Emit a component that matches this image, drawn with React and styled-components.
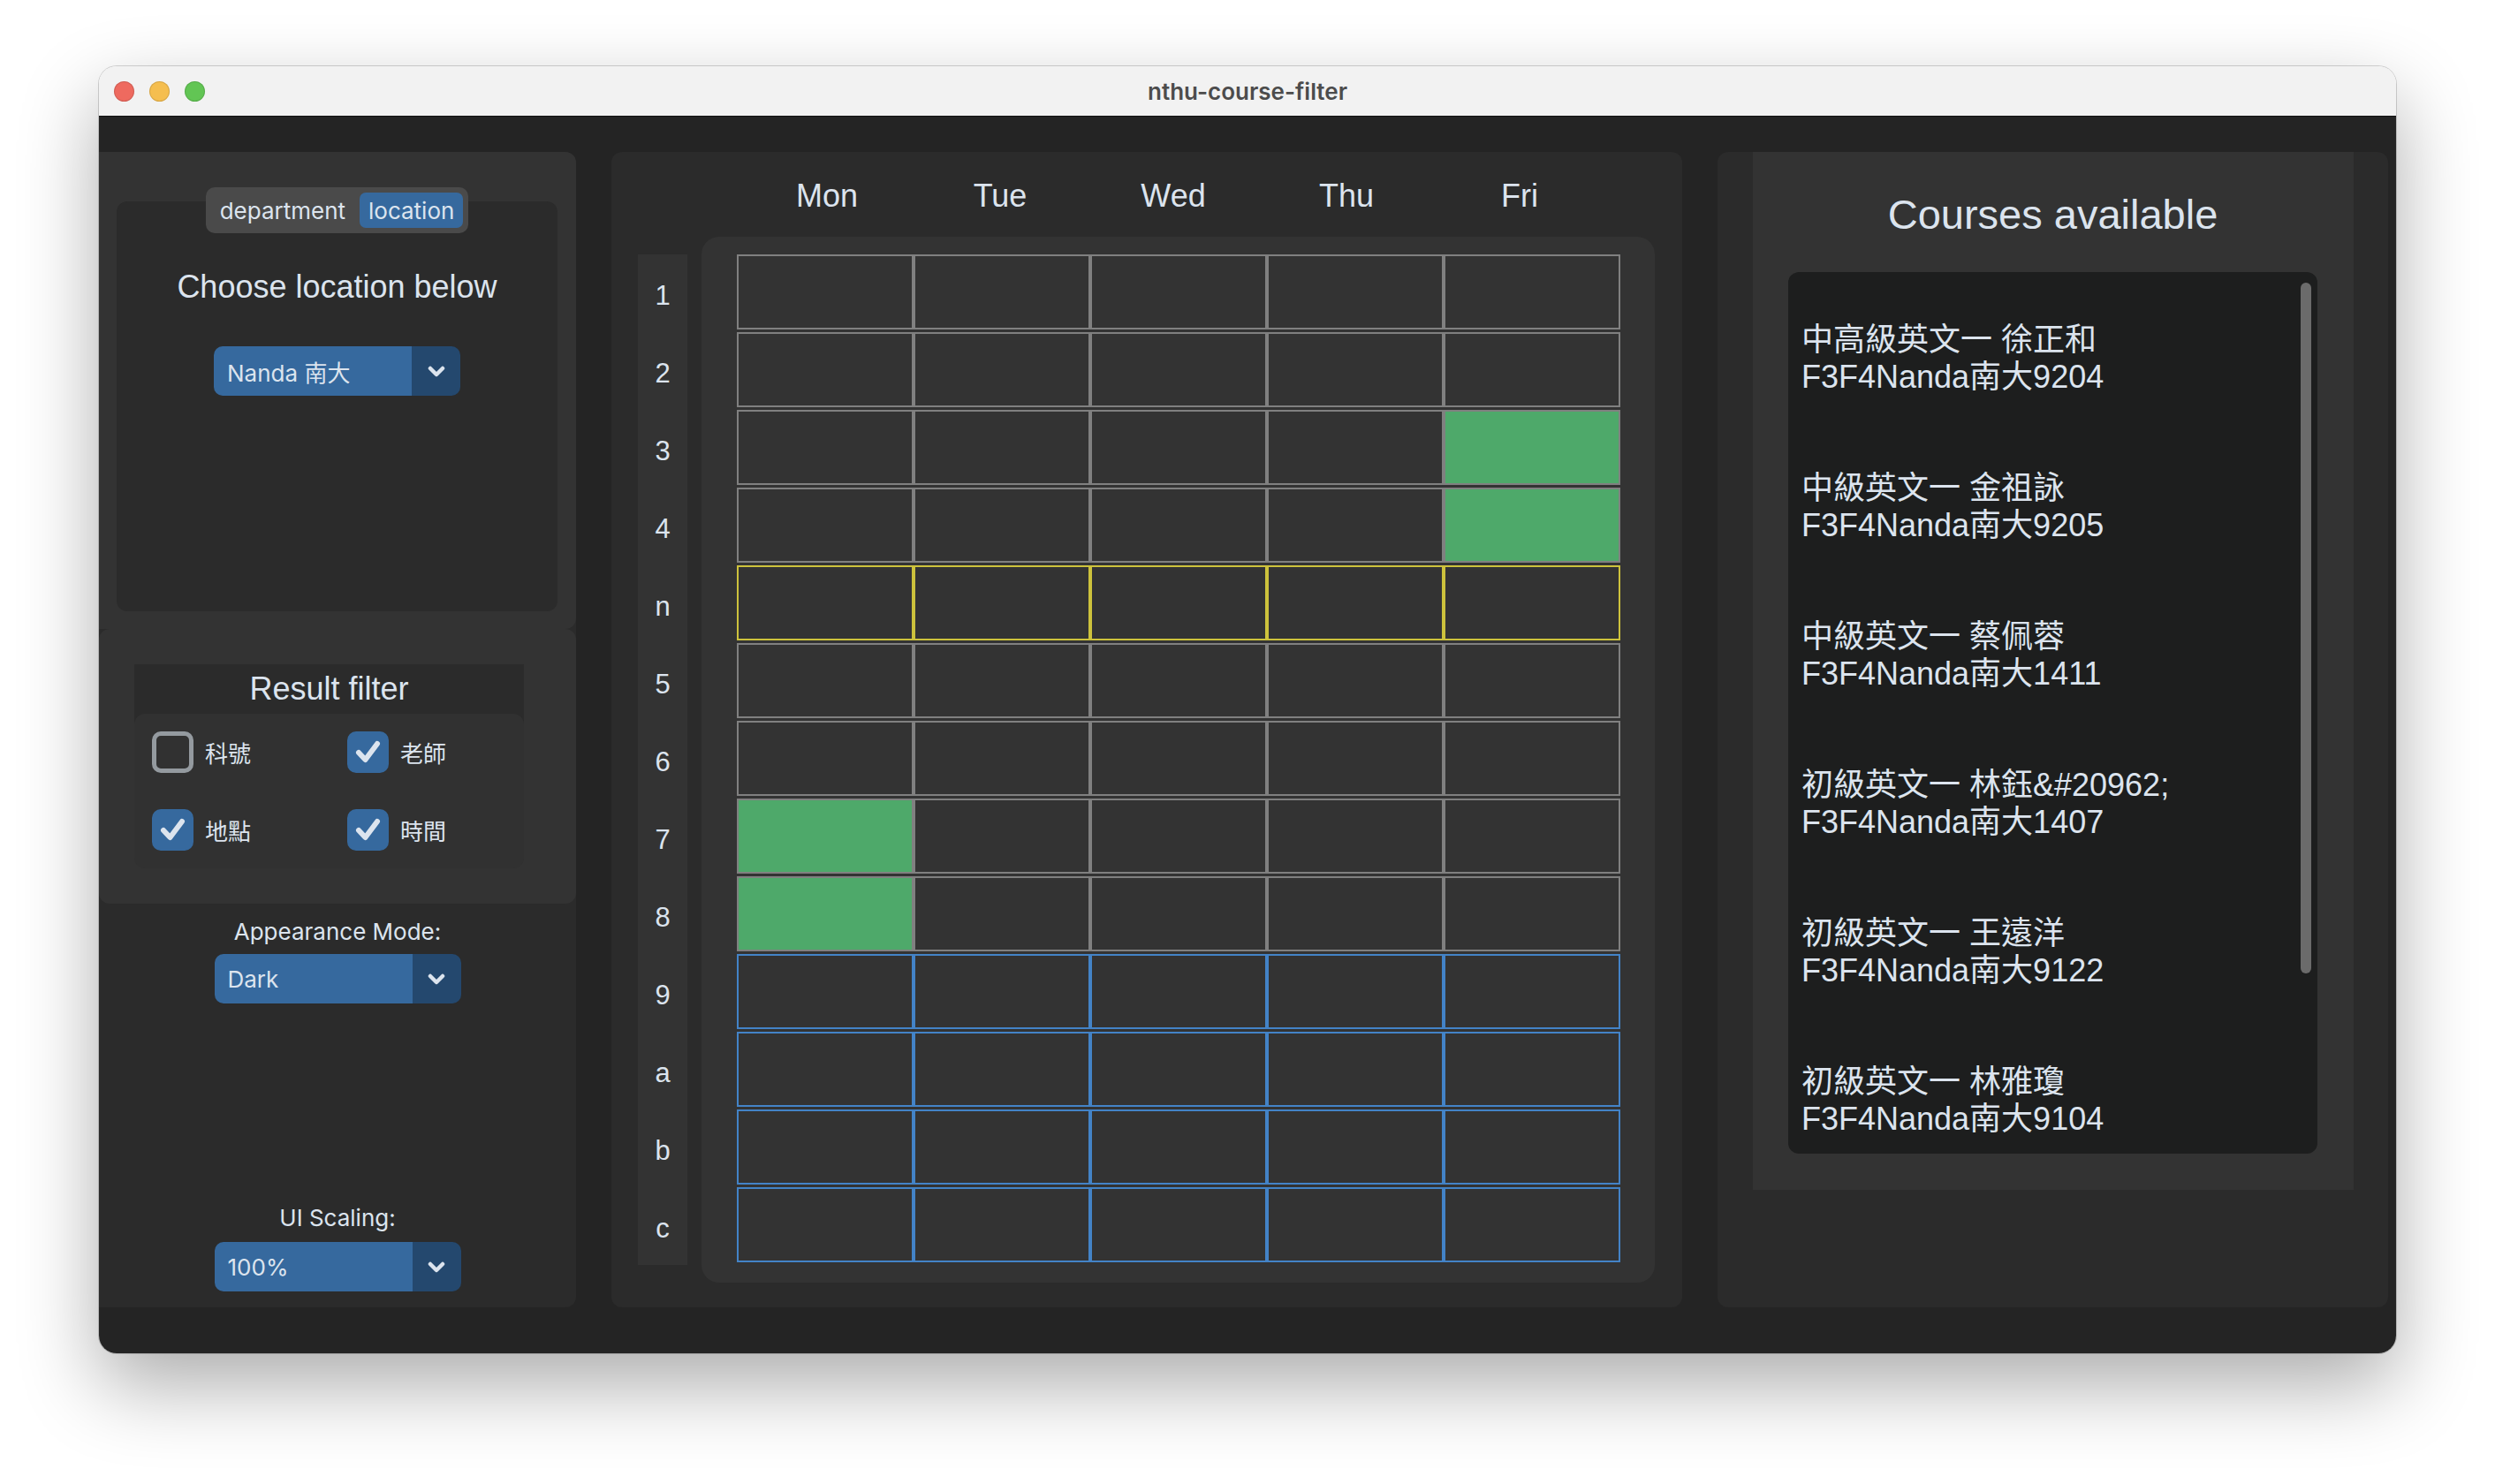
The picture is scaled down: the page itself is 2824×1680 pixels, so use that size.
import styled, { createGlobalStyle } from "styled-components";

const GlobalStyle = createGlobalStyle`
  html, body {
    margin: 0;
    padding: 0;
    background: #ffffff;
  }
  body {
    font-family: "Liberation Sans", "Noto Sans CJK TC", sans-serif;
    color: #dce4ee;
  }
  * {
    box-sizing: border-box;
  }
`;

const Page = styled.div`
  width: 2824px;
  height: 1680px;
  padding: 75px 0 0 112px;
`;

const Window = styled.div`
  width: 2600px;
  height: 1457px;
  display: flex;
  flex-direction: column;
  border-radius: 20px;
  overflow: hidden;
  box-shadow: 0 0 0 1px rgba(0, 0, 0, 0.16), 0 36px 90px rgba(0, 0, 0, 0.33);
`;

const TitleBar = styled.div`
  height: 57px;
  display: grid;
  grid-template-columns: 1fr auto 1fr;
  align-items: center;
  background: #f2f2f2;
  border-bottom: 1px solid #111;
`;

const Lights = styled.div`
  display: flex;
  gap: 17px;
  padding-left: 17px;
`;

const Light = styled.span`
  width: 23px;
  height: 23px;
  border-radius: 50%;
  background: ${(p) => p.$color};
  box-shadow: inset 0 0 0 1px rgba(0, 0, 0, 0.12);
`;

const WindowTitle = styled.div`
  font-family: "Inter", sans-serif;
  font-weight: 600;
  font-size: 26px;
  color: #4c4c4c;
`;

const Content = styled.div`
  flex: 1;
  display: flex;
  gap: 40px;
  padding: 40px 9px 52px 0;
  background: #242424;
`;

/* ---------- sidebar ---------- */

const Sidebar = styled.div`
  width: 540px;
  display: flex;
  flex-direction: column;
  background: #2b2b2b;
  border-radius: 0 12px 12px 0;
  padding-bottom: 18px;
`;

const TopFrame = styled.div`
  height: 540px;
  display: flex;
  padding: 56px 21px 20px 20px;
  background: #333333;
  border-radius: 0 12px 12px 0;
`;

const TabFrame = styled.div`
  flex: 1;
  display: flex;
  flex-direction: column;
  align-items: center;
  background: #2b2b2b;
  border-radius: 12px;
`;

const Segmented = styled.div`
  margin-top: -16px;
  display: flex;
  gap: 6px;
  padding: 6px;
  background: #4a4a4a;
  border-radius: 10px;
`;

const SegButton = styled.div`
  height: 40px;
  padding: 0 10px;
  display: flex;
  align-items: center;
  font-family: "Inter", sans-serif;
  font-size: 26px;
  color: #dce4ee;
  border-radius: 7px;
  background: ${(p) => (p.$active ? "#36699e" : "transparent")};
`;

const ChooseLabel = styled.div`
  margin-top: 39px;
  font-size: 36px;
  line-height: 43px;
`;

const Dropdown = styled.div`
  margin-top: ${(p) => p.$top || 0}px;
  width: 279px;
  height: 56px;
  display: flex;
  border-radius: 10px;
  overflow: hidden;
  align-self: center;
`;

const DropValue = styled.div`
  flex: 1;
  display: flex;
  align-items: center;
  padding-left: 15px;
  background: #36699e;
  font-family: "Inter", "Noto Sans CJK TC", sans-serif;
  font-size: 26px;
  color: #dce4ee;
`;

const DropArrow = styled.div`
  width: 55px;
  display: flex;
  align-items: center;
  justify-content: center;
  background: #24486e;
`;

const FilterFrame = styled.div`
  height: 311px;
  padding: 40px 59px 0 40px;
  background: #333333;
  border-radius: 12px;
`;

const FilterBox = styled.div`
  background: linear-gradient(to bottom, #2b2b2b 0 80px, transparent 80px);
`;

const FilterTitle = styled.div`
  height: 56px;
  display: flex;
  align-items: center;
  justify-content: center;
  font-size: 36px;
`;

const CheckGrid = styled.div`
  display: grid;
  grid-template-columns: 221px 1fr;
  row-gap: 41px;
  padding: 20px;
  background: #313131;
  border-radius: 12px;
`;

const CheckItem = styled.div`
  display: flex;
  align-items: center;
  gap: 13px;
  font-family: "Inter", "Noto Sans CJK TC", sans-serif;
  font-size: 26px;
  color: #dce4ee;
`;

const Box = styled.div`
  width: 47px;
  height: 47px;
  border-radius: 10px;
  display: flex;
  align-items: center;
  justify-content: center;
  background: ${(p) => (p.$checked ? "#36699e" : "transparent")};
  border: ${(p) => (p.$checked ? "none" : "5px solid #949a9f")};
`;

const SideLabel = styled.div`
  margin-top: ${(p) => (p.$auto ? "auto" : `${p.$top}px`)};
  align-self: center;
  font-family: "Inter", sans-serif;
  font-size: 26px;
  line-height: 32px;
  color: #dce4ee;
`;

/* ---------- schedule ---------- */

const SchedulePanel = styled.div`
  width: 1212px;
  display: flex;
  flex-direction: column;
  background: #2b2b2b;
  border-radius: 12px;
`;

const DayRow = styled.div`
  display: grid;
  grid-template-columns: repeat(5, 196px);
  padding: 28px 0 0 146px;
`;

const Day = styled.div`
  text-align: center;
  font-size: 36px;
  line-height: 43px;
`;

const ScheduleBody = styled.div`
  display: flex;
  align-items: flex-start;
  margin-top: 25px;
  padding-left: 30px;
`;

const RowLabels = styled.div`
  width: 56px;
  margin-top: 20px;
  padding-bottom: 3px;
  display: grid;
  grid-auto-rows: 85px;
  row-gap: 3px;
  background: #333333;
`;

const RowLabel = styled.div`
  display: flex;
  align-items: center;
  justify-content: center;
  padding-top: 8px;
  font-size: 31px;
`;

const GridFrame = styled.div`
  margin-left: 16px;
  padding: 20px 39px 23px 40px;
  background: #333333;
  border-radius: 20px;
`;

const Cells = styled.div`
  display: grid;
  grid-template-columns: repeat(5, 200px);
  grid-auto-rows: 85px;
  row-gap: 3px;
`;

const Cell = styled.div`
  border: 2px solid ${(p) => p.$edge};
  background: ${(p) => (p.$busy ? "#4ea96a" : "#333333")};
`;

/* ---------- courses ---------- */

const CoursePanel = styled.div`
  width: 759px;
  display: flex;
  padding: 0 39px 133px 40px;
  background: #2b2b2b;
  border-radius: 12px;
`;

const CourseInner = styled.div`
  flex: 1;
  display: flex;
  flex-direction: column;
  padding: 43px 41px 41px 40px;
  background: #333333;
`;

const CourseTitle = styled.div`
  text-align: center;
  font-size: 47px;
  line-height: 56px;
`;

const CourseList = styled.div`
  position: relative;
  flex: 1;
  margin-top: 37px;
  padding: 56px 15px 0;
  display: flex;
  flex-direction: column;
  gap: 84px;
  background: #1d1e1e;
  border-radius: 12px;
  overflow: hidden;
`;

const Course = styled.div`
  font-size: 36px;
  line-height: 42px;
  white-space: nowrap;
`;

const Scrollbar = styled.div`
  position: absolute;
  top: 12px;
  right: 7px;
  width: 12px;
  height: 782px;
  border-radius: 6px;
  background: #6b6b6b;
`;

const rows = ["1", "2", "3", "4", "n", "5", "6", "7", "8", "9", "a", "b", "c"];
const days = ["Mon", "Tue", "Wed", "Thu", "Fri"];
// row index - day index of the slots that are taken
const busy = { "2-4": true, "3-4": true, "7-0": true, "8-0": true };

const courses = [
  ["中高級英文一 徐正和", "F3F4Nanda南大9204"],
  ["中級英文一 金祖詠", "F3F4Nanda南大9205"],
  ["中級英文一 蔡佩蓉", "F3F4Nanda南大1411"],
  ["初級英文一 林鈺&#20962;", "F3F4Nanda南大1407"],
  ["初級英文一 王遠洋", "F3F4Nanda南大9122"],
  ["初級英文一 林雅瓊", "F3F4Nanda南大9104"],
];

function edgeFor(row) {
  if (row === "n") return "#cdc23c";
  if (["9", "a", "b", "c"].includes(row)) return "#4383c7";
  return "#808080";
}

function Chevron() {
  return (
    <svg width="20" height="13" viewBox="0 0 20 13">
      <path
        d="M3 3 L10 10 L17 3"
        fill="none"
        stroke="#dce4ee"
        strokeWidth="4.5"
        strokeLinecap="round"
        strokeLinejoin="round"
      />
    </svg>
  );
}

function Select({ value, top }) {
  return (
    <Dropdown $top={top}>
      <DropValue>{value}</DropValue>
      <DropArrow>
        <Chevron />
      </DropArrow>
    </Dropdown>
  );
}

function Check({ label, checked }) {
  return (
    <CheckItem>
      <Box $checked={checked}>
        {checked && (
          <svg width="47" height="47" viewBox="0 0 47 47">
            <path
              d="M13 24 L20.5 32 L34 14"
              fill="none"
              stroke="#dce4ee"
              strokeWidth="6"
              strokeLinecap="round"
              strokeLinejoin="round"
            />
          </svg>
        )}
      </Box>
      {label}
    </CheckItem>
  );
}

export default function App() {
  return (
    <>
      <GlobalStyle />
      <Page>
        <Window>
          <TitleBar>
            <Lights>
              <Light $color="#ee6a5f" />
              <Light $color="#f5be4f" />
              <Light $color="#62c554" />
            </Lights>
            <WindowTitle>nthu-course-filter</WindowTitle>
            <div />
          </TitleBar>

          <Content>
            <Sidebar>
              <TopFrame>
                <TabFrame>
                  <Segmented>
                    <SegButton>department</SegButton>
                    <SegButton $active>location</SegButton>
                  </Segmented>
                  <ChooseLabel>Choose location below</ChooseLabel>
                  <Select value="Nanda 南大" top={46} />
                </TabFrame>
              </TopFrame>

              <FilterFrame>
                <FilterBox>
                  <FilterTitle>Result filter</FilterTitle>
                  <CheckGrid>
                    <Check label="科號" />
                    <Check label="老師" checked />
                    <Check label="地點" checked />
                    <Check label="時間" checked />
                  </CheckGrid>
                </FilterBox>
              </FilterFrame>

              <SideLabel $top={16}>Appearance Mode:</SideLabel>
              <Select value="Dark" top={9} />
              <SideLabel $auto>UI Scaling:</SideLabel>
              <Select value="100%" top={11} />
            </Sidebar>

            <SchedulePanel>
              <DayRow>
                {days.map((d) => (
                  <Day key={d}>{d}</Day>
                ))}
              </DayRow>
              <ScheduleBody>
                <RowLabels>
                  {rows.map((r) => (
                    <RowLabel key={r}>{r}</RowLabel>
                  ))}
                </RowLabels>
                <GridFrame>
                  <Cells>
                    {rows.map((r, ri) =>
                      days.map((d, ci) => (
                        <Cell
                          key={`${r}-${d}`}
                          $edge={edgeFor(r)}
                          $busy={busy[`${ri}-${ci}`]}
                        />
                      ))
                    )}
                  </Cells>
                </GridFrame>
              </ScheduleBody>
            </SchedulePanel>

            <CoursePanel>
              <CourseInner>
                <CourseTitle>Courses available</CourseTitle>
                <CourseList>
                  {courses.map(([name, place]) => (
                    <Course key={place}>
                      {name}
                      <br />
                      {place}
                    </Course>
                  ))}
                  <Scrollbar />
                </CourseList>
              </CourseInner>
            </CoursePanel>
          </Content>
        </Window>
      </Page>
    </>
  );
}
